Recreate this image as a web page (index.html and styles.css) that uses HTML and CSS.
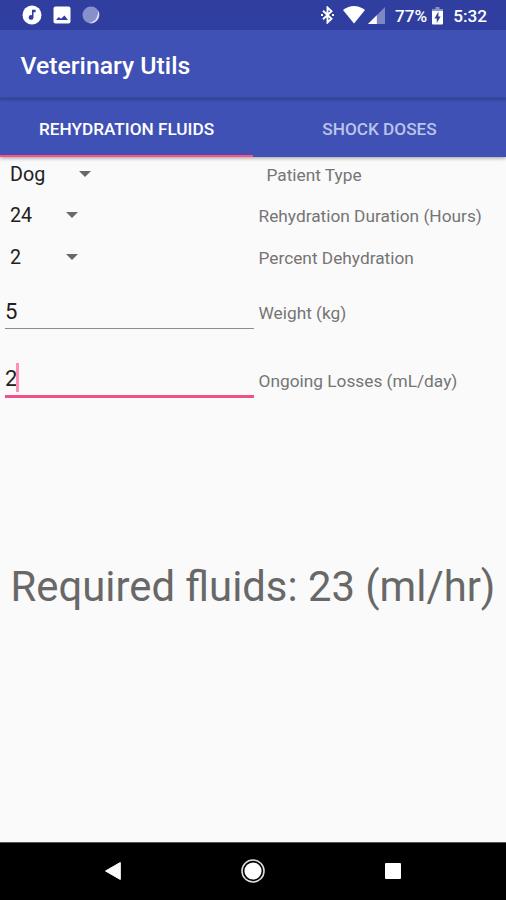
FILE: index.html
```html
<!DOCTYPE html>
<html lang="en">
<head>
<meta charset="utf-8">
<title>Veterinary Utils</title>
<link rel="stylesheet" href="styles.css">
</head>
<body>
<div class="screen">
  <header class="status">
    <div class="notifications">
      <svg width="20" height="20" viewBox="0 0 20 20"><circle cx="10" cy="10" r="9.5" fill="#fff"/><path d="M10 4.700h3.600v2.500h-2.100v5.200a2.400 2.400 0 1 1-1.500-2.200z" fill="#303f9f"/></svg>
      <svg width="18" height="18" viewBox="0 0 18 18"><rect x=".5" y=".5" width="17" height="17" rx="2" fill="#fff"/><path d="M3 14l2.800-3 2.200 1.700L11.500 9.500 15 14z" fill="#303f9f"/></svg>
      <svg width="18" height="18" viewBox="0 0 18 18"><circle cx="9" cy="9" r="8.500" fill="#8790ca"/><path d="M16 4.500Q18.500 9 15.500 13.500Q12 18 7.500 17Q13 15.500 14.500 12Q16.500 9 16 4.500z" fill="#e5e8f7"/></svg>
    </div>
    <div class="indicators">
      <svg class="bluetooth" width="13" height="18" viewBox="0 0 13 18"><path d="M2 4.800l8.500 8-4 3.700V1.500l4 3.700-8.500 8" fill="none" stroke="#fff" stroke-width="1.900"/><path d="M0 8h2v2H0zM11 8h2v2h-2z" fill="#fff"/></svg>
      <svg class="wifi" width="22" height="18" viewBox="0 0 22 18"><path d="M0 4Q11-4 22 4L11 17.500z" fill="#fff"/></svg>
      <svg class="signal" width="17" height="17" viewBox="0 0 17 17"><path d="M17 0v17H0z" fill="#7d87c4"/><path d="M8.800 8.200V17H0z" fill="#fff"/></svg>
      <span class="percent">77%</span>
      <svg class="battery" width="11" height="18" viewBox="0 0 11 18"><path d="M3.500 0h4v2H11v3H0V2h3.500z" fill="#8790ca"/><path d="M0 4h11v12.500q0 1-1 1H1q-1 0-1-1z" fill="#fff"/><path d="M6.400 4.500L2.500 11.500h2.300V16L8.600 9.500H6.400z" fill="#303f9f"/></svg>
      <span class="clock">5:32</span>
    </div>
  </header>
  <div class="appbar"><h1>Veterinary Utils</h1></div>
  <nav class="tabs">
    <div class="tab active"><span>REHYDRATION FLUIDS</span></div>
    <div class="tab"><span>SHOCK DOSES</span></div>
  </nav>
  <main>
    <div class="row first"><div class="spinner wide"><span>Dog</span><i class="arrow"></i></div><label>Patient Type</label></div>
    <div class="row"><div class="spinner"><span>24</span><i class="arrow"></i></div><label>Rehydration Duration (Hours)</label></div>
    <div class="row"><div class="spinner"><span>2</span><i class="arrow"></i></div><label>Percent Dehydration</label></div>
    <div class="row entry weight"><div class="field">5</div><label>Weight (kg)</label></div>
    <div class="row entry losses"><div class="field focused">2<i class="caret"></i></div><label>Ongoing Losses (mL/day)</label></div>
    <p class="result">Required fluids: 23 (ml/hr)</p>
  </main>
  <footer class="navbar">
    <svg width="16" height="18" viewBox="0 0 16 18"><path d="M15.300.500v17L.500 9z" fill="#fff" stroke="#fff" stroke-linejoin="round"/></svg>
    <svg width="24" height="24" viewBox="0 0 24 24"><circle cx="12" cy="12" r="11" fill="none" stroke="#ddd" stroke-width="1.600"/><circle cx="12" cy="12" r="8.600" fill="#fff"/></svg>
    <svg width="16" height="16" viewBox="0 0 16 16"><rect width="16" height="16" rx="1" fill="#fff"/></svg>
  </footer>
</div>
</body>
</html>
```
FILE: styles.css
```css
* { box-sizing: border-box; }
body { margin: 0; font-family: Roboto, sans-serif; }
svg { display: block; flex: none; }
.screen { width: 506px; height: 900px; display: flex; flex-direction: column; background: #fafafa; overflow: hidden; }
.status { height: 30px; flex: none; background: #303f9f; display: flex; justify-content: space-between; color: #fff; padding: 0 19px 0 22px; }
.notifications, .indicators { display: flex; align-items: center; }
.notifications { gap: 11px; }
.indicators { font-size: 17.2px; font-weight: 500; line-height: 30px; padding-top: 1px; }
.bluetooth { margin-top: -1px; }
.wifi { margin: -2px 0 0 9px; }
.signal { margin-left: 3px; }
.percent { margin-left: 10px; }
.battery { margin-left: 5px; }
.clock { margin-left: 10px; }
.appbar { height: 69px; flex: none; background: linear-gradient(#3f51b5 67px, #35459a 69px); padding-left: 20.500px; display: flex; align-items: center; }
h1 { margin: 3px 0 0; font-size: 24.8px; font-weight: 500; line-height: 30px; color: #fff; }
.tabs { height: 58px; flex: none; background: linear-gradient(#35469c, #3f51b5 3px); display: flex; box-shadow: 0 1px 4px rgba(0,0,0,.4); z-index: 1; }
.tab { flex: 1; display: flex; align-items: center; justify-content: center; font-size: 17.2px; font-weight: 500; color: #bcc3e8; padding-top: 2px; }
.tab.active { color: #fff; border-bottom: 2px solid #ff5086; padding-top: 4px; }
main { flex: 1; }
.row { display: grid; grid-template-columns: 254px 1fr; height: 42px; align-items: center; color: #757575; }
.row.first { height: 38px; padding-bottom: 3px; }
.row label { font-size: 17.3px; line-height: 22px; padding-left: 4.500px; }
.row.first label { padding-left: 12.500px; }
.spinner { display: flex; align-items: center; justify-content: space-between; width: 78px; padding-left: 10px; font-size: 19.7px; line-height: 26px; color: #212121; }
.spinner.wide { width: 91px; }
.arrow { width: 0; height: 0; margin-top: -2px; border: 6px solid transparent; border-top: 6px solid #686868; border-bottom: 0; }
.row.entry { align-items: start; }
.weight { height: 67px; padding-top: 19px; }
.weight label, .losses label { padding-top: 4px; }
.losses { height: 68px; padding-top: 19px; }
.field { margin-left: 5px; width: 249px; height: 31px; font-size: 22.1px; line-height: 26px; color: #212121; border-bottom: 1.500px solid #8c8c8c; display: flex; }
.field.focused { height: 33px; border-bottom: 3px solid #f0508a; }
.caret { width: 3px; height: 29px; margin: -2px 0 0 -1px; background: #ff8fb3; }
.losses label { padding-top: 5px; }
.result { margin: 148px 0 0; text-align: center; font-size: 41.8px; line-height: 50px; color: #686868; white-space: nowrap; }
.navbar { height: 58px; flex: none; background: #000; border-top: 1px solid #555; display: flex; justify-content: space-between; align-items: center; padding: 0 105px 2px; }
```
